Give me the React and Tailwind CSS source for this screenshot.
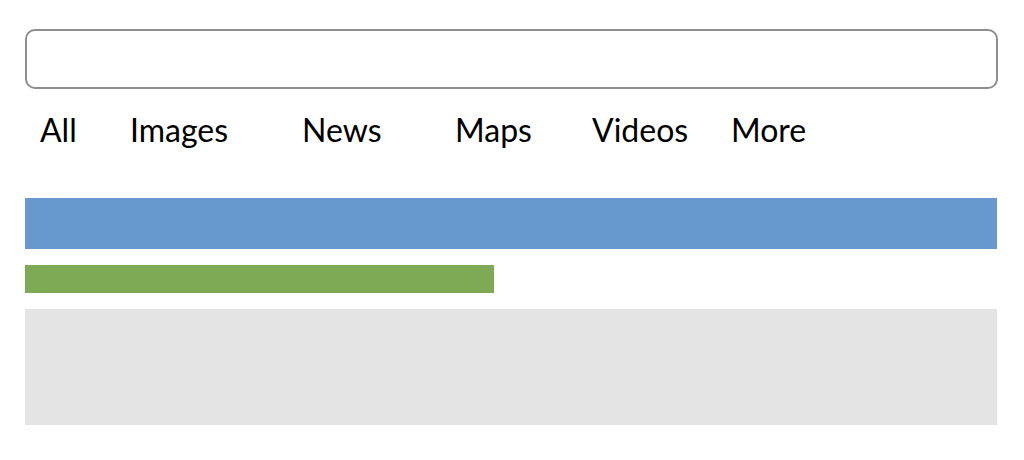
import React from 'react';

const tabs = [
  { label: 'All', w: 'w-[90px]' },
  { label: 'Images', w: 'w-[172px]' },
  { label: 'News', w: 'w-[153px]' },
  { label: 'Maps', w: 'w-[137px]' },
  { label: 'Videos', w: 'w-[139px]' },
  { label: 'More', w: 'w-[100px]' },
];

function App() {
  return (
    <div className="w-[1024px] h-[460px] bg-white px-[25px] pt-[29px] overflow-hidden">
      {/* Search box */}
      <div className="w-[973px] h-[60px] rounded-[10px] border-2 border-[#8e8e8e] bg-white" />

      {/* Tabs */}
      <div
        className="mt-[23px] flex pl-[15px] text-[32px] leading-[36px] text-black"
        style={{ fontFamily: 'Lato, "Open Sans", sans-serif' }}
      >
        {tabs.map((t) => (
          <span key={t.label} className={t.w}>
            {t.label}
          </span>
        ))}
      </div>

      {/* Blocks */}
      <div className="mt-[50px] w-[972px] h-[51px] bg-[#6799ce]" />
      <div className="mt-[16px] w-[469px] h-[28px] bg-[#7eaa55]" />
      <div className="mt-[16px] w-[972px] h-[116px] bg-[#e5e4e4]" />
    </div>
  );
}

export default App;
